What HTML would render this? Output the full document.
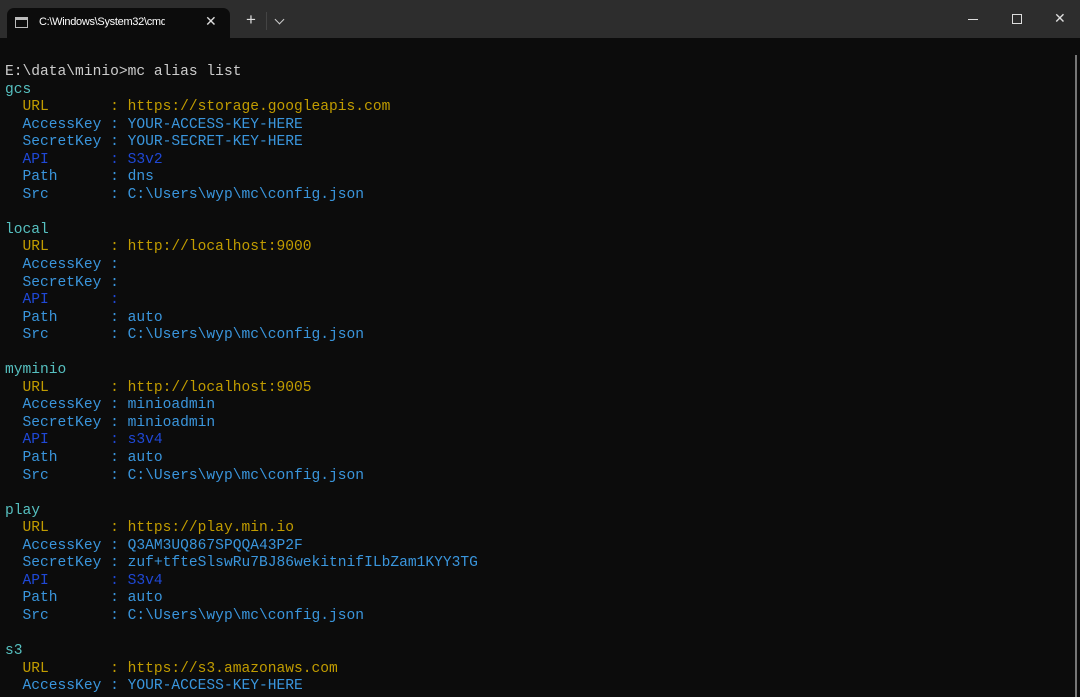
<!DOCTYPE html>
<html><head><meta charset="utf-8"><style>
*{margin:0;padding:0;box-sizing:border-box}
body{width:1080px;height:697px;overflow:hidden;background:#0c0c0c;position:relative;font-family:"Liberation Sans",sans-serif}
.bar{position:absolute;left:0;top:0;width:1080px;height:38px;background:#2d2d2d}
.tab{position:absolute;left:7px;top:8px;width:223px;height:30px;background:#0c0c0c;border-radius:7px 7px 0 0}
.tab .t{position:absolute;left:32px;top:8px;font-size:11px;color:#fff;white-space:nowrap;width:126px;overflow:hidden;letter-spacing:-0.3px}
.tab .x{position:absolute;left:198px;top:5px;color:#ddd;font-size:14px}
.ico{position:absolute;left:8px;top:9px;width:13px;height:11px;border:1px solid #bbb;border-top:3px solid #bbb}
.plus{position:absolute;left:246px;top:10px;color:#ddd;font-size:17px}
.chev{position:absolute;left:276px;top:16px;width:7px;height:7px;border-right:1.3px solid #ccc;border-bottom:1.3px solid #ccc;transform:rotate(45deg)}
.sep{position:absolute;left:266px;top:12px;width:1px;height:18px;background:#444}
.min{position:absolute;left:968px;top:19px;width:10px;height:1px;background:#ddd}
.max{position:absolute;left:1012px;top:14px;width:10px;height:10px;border:1px solid #ddd}
.cls{position:absolute;left:1054px;top:10px;color:#ddd;font-size:14px}
.sb{position:absolute;left:1075px;top:55px;width:2px;height:642px;background:#777}
pre{position:absolute;left:5px;top:64px;font-family:"Liberation Mono",monospace;font-size:14.6px;line-height:17.55px;color:#cccccc}
.a{color:#56c0c0}.y{color:#c19c00}.b{color:#3a96dd}.d{color:#1f48d6}
</style></head><body>
<div class="bar"><div class="tab"><div class="ico"></div><div class="t">C:\Windows\System32\cmd.exe</div><div class="x">✕</div></div>
<div class="plus">+</div><div class="sep"></div><div class="chev"></div>
<div class="min"></div><div class="max"></div><div class="cls">✕</div></div>
<div class="sb"></div>
<pre>E:\data\minio&gt;mc alias list
<span class="a">gcs</span>
<span class="y">  URL       : https://storage.googleapis.com</span>
<span class="b">  AccessKey : YOUR-ACCESS-KEY-HERE</span>
<span class="b">  SecretKey : YOUR-SECRET-KEY-HERE</span>
<span class="d">  API       : S3v2</span>
<span class="b">  Path      : dns</span>
<span class="b">  Src       : C:\Users\wyp\mc\config.json</span>

<span class="a">local</span>
<span class="y">  URL       : http://localhost:9000</span>
<span class="b">  AccessKey :</span>
<span class="b">  SecretKey :</span>
<span class="d">  API       :</span>
<span class="b">  Path      : auto</span>
<span class="b">  Src       : C:\Users\wyp\mc\config.json</span>

<span class="a">myminio</span>
<span class="y">  URL       : http://localhost:9005</span>
<span class="b">  AccessKey : minioadmin</span>
<span class="b">  SecretKey : minioadmin</span>
<span class="d">  API       : s3v4</span>
<span class="b">  Path      : auto</span>
<span class="b">  Src       : C:\Users\wyp\mc\config.json</span>

<span class="a">play</span>
<span class="y">  URL       : https://play.min.io</span>
<span class="b">  AccessKey : Q3AM3UQ867SPQQA43P2F</span>
<span class="b">  SecretKey : zuf+tfteSlswRu7BJ86wekitnifILbZam1KYY3TG</span>
<span class="d">  API       : S3v4</span>
<span class="b">  Path      : auto</span>
<span class="b">  Src       : C:\Users\wyp\mc\config.json</span>

<span class="a">s3</span>
<span class="y">  URL       : https://s3.amazonaws.com</span>
<span class="b">  AccessKey : YOUR-ACCESS-KEY-HERE</span>
</pre>
</body></html>
